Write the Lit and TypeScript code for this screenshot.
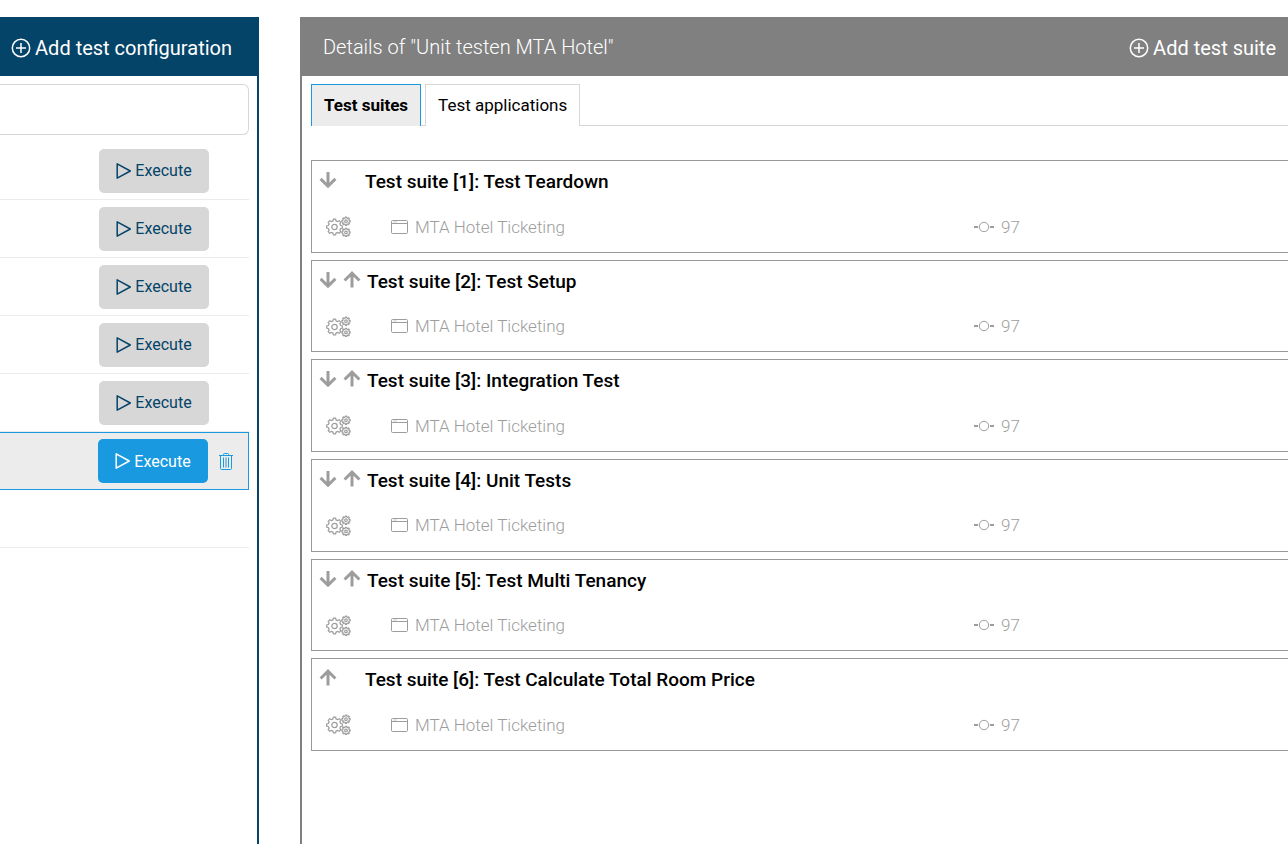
import { LitElement, html, svg, css, nothing } from "lit";
import { customElement, property, state } from "lit/decorators.js";
import { classMap } from "lit/directives/class-map.js";

/** Outline of a cog wheel with rounded-off teeth. */
function cog(cx: number, cy: number, outer: number, inner: number, teeth: number): string {
  const step = (Math.PI * 2) / teeth;
  const points: string[] = [];
  for (let i = 0; i < teeth; i++) {
    const mid = i * step;
    const corners: [number, number][] = [
      [inner, -0.3],
      [outer, -0.19],
      [outer, 0.19],
      [inner, 0.3],
    ];
    for (const [radius, offset] of corners) {
      const angle = mid + offset * step;
      points.push(`${(cx + radius * Math.cos(angle)).toFixed(2)} ${(cy + radius * Math.sin(angle)).toFixed(2)}`);
    }
  }
  return `M${points.join("L")}Z`;
}

const plusIcon = html`<svg width="20" height="20" viewBox="0 0 20 20" aria-hidden="true" fill="none" stroke="currentColor" stroke-width="1.5">
  <circle cx="10" cy="10" r="8.7" /><path d="M10 5v10M5 10h10" />
</svg>`;

const playIcon = html`<svg width="16" height="18" viewBox="0 0 16 18" aria-hidden="true" fill="none" stroke="currentColor" stroke-width="1.5" stroke-linejoin="round">
  <path d="M1.2 1.8L14.3 9L1.2 16.2Z" />
</svg>`;

const trashIcon = html`<svg width="14" height="17" viewBox="0 0 14 17" aria-hidden="true" fill="none" stroke="currentColor" stroke-width="1">
  <path d="M0 2.5H14M4.5 2.5V1.5Q4.5 .5 5.5 .5H8.5Q9.5 .5 9.5 1.5V2.5M1.5 2.5V15.5Q1.5 16.5 2.5 16.5H11.5Q12.5 16.5 12.5 15.5V2.5M4.5 4.5V14.5M7 4.5V14.5M9.5 4.5V14.5" />
</svg>`;

const downIcon = html`<svg width="18" height="18" viewBox="0 0 18 18" aria-hidden="true" fill="none" stroke="currentColor" stroke-width="3">
  <path d="M9 1V15M1.6 7.9L9 15.2L16.4 7.9" />
</svg>`;

const upIcon = html`<svg width="18" height="18" viewBox="0 0 18 18" aria-hidden="true" fill="none" stroke="currentColor" stroke-width="3">
  <path d="M9 16.4V2.4M1.6 9.5L9 2.2L16.4 9.5" />
</svg>`;

const gears = [
  { x: 8.5, y: 11, outer: 7.9, inner: 6.3, hub: 2.7, teeth: 8 },
  { x: 20, y: 5.2, outer: 4.2, inner: 3.3, hub: 1.3, teeth: 8 },
  { x: 20, y: 16.4, outer: 4.2, inner: 3.3, hub: 1.3, teeth: 8 },
];

const gearsIcon = html`<svg width="25" height="21" viewBox="0 0 25 21" aria-hidden="true" fill="none" stroke="currentColor" stroke-width="1.2" stroke-linejoin="round">
  ${gears.map((g) => svg`<path d=${cog(g.x, g.y, g.outer, g.inner, g.teeth)} /><circle cx=${g.x} cy=${g.y} r=${g.hub} />`)}
</svg>`;

const windowIcon = html`<svg width="17" height="14" viewBox="0 0 17 14" aria-hidden="true" fill="none" stroke="currentColor">
  <path d="M1.5 .5H15.5Q16.5 .5 16.5 1.5V12.5Q16.5 13.5 15.5 13.5H1.5Q.5 13.5 .5 12.5V1.5Q.5 .5 1.5 .5ZM.5 3.5H16.5M2.5 2H3.5M4.5 2H5.5" />
</svg>`;

const stepIcon = html`<svg width="20" height="12" viewBox="0 0 20 12" aria-hidden="true" fill="none" stroke="currentColor">
  <circle cx="10" cy="6" r="4.7" /><path stroke-width="2" d="M0 6H4M16 6H20" />
</svg>`;

@customElement("test-suite-card")
class TestSuiteCard extends LitElement {
  @property() heading = "";
  @property() application = "";
  @property({ type: Number }) steps = 0;
  @property({ type: Boolean }) down = false;
  @property({ type: Boolean }) up = false;

  static styles = css`
    :host {
      display: block;
      box-sizing: border-box;
      border: 1px solid #999;
      border-right: 0;
      color: #9d9d9d;
    }
    .top {
      display: flex;
      align-items: center;
      height: 42px;
      padding-left: 7px;
    }
    .moves {
      display: flex;
      gap: 6px;
      min-width: 46px;
      padding-bottom: 4px;
    }
    .move {
      display: block;
      padding: 0;
      border: 0;
      background: none;
      color: inherit;
    }
    svg {
      display: block;
      flex: none;
    }
    .title {
      margin: 0;
      color: #000;
      font-size: 19px;
      font-weight: 500;
      line-height: 24px;
    }
    .both {
      min-width: 48px;
    }
    .info {
      display: grid;
      grid-template-columns: 79px 13fr 7fr;
      align-items: center;
      height: 47px;
      font-size: 17px;
      font-weight: 300;
    }
    .kind {
      padding-left: 14px;
    }
    .item {
      display: flex;
      align-items: center;
      gap: 7px;
    }
  `;

  render() {
    return html`
      <div class="top">
        <div class=${classMap({ moves: true, both: this.down && this.up })}>
          ${this.down ? html`<button class="move" aria-label="Move down">${downIcon}</button>` : nothing}
          ${this.up ? html`<button class="move" aria-label="Move up">${upIcon}</button>` : nothing}
        </div>
        <h3 class="title">${this.heading}</h3>
      </div>
      <div class="info">
        <span class="kind">${gearsIcon}</span>
        <span class="item">${windowIcon}<span>${this.application}</span></span>
        <span class="item">${stepIcon}<span>${this.steps}</span></span>
      </div>
    `;
  }
}

@customElement("app-root")
class AppRoot extends LitElement {
  @state() private tab = 0;

  private tabs = ["Test suites", "Test applications"];
  private suites = [
    "Test Teardown",
    "Test Setup",
    "Integration Test",
    "Unit Tests",
    "Test Multi Tenancy",
    "Test Calculate Total Room Price",
  ];
  private configurations = ["idle", "idle", "idle", "idle", "idle", "selected", "empty"];

  static styles = css`
    :host {
      display: grid;
      grid-template-columns: minmax(259px, 1fr) minmax(0, 4fr);
      gap: 41px;
      box-sizing: border-box;
      min-height: 100vh;
      padding-top: 17px;
      background: #fff;
      color: #000;
      font-family: Roboto, "Open Sans", sans-serif;
      font-size: 16px;
    }
    button,
    input {
      font: inherit;
    }
    svg {
      display: block;
      flex: none;
    }
    .configs {
      border-right: 2px solid #044468;
    }
    .details {
      border-left: 2px solid #808080;
    }
    .bar {
      display: flex;
      align-items: center;
      justify-content: flex-end;
      height: 59px;
      color: #fff;
      font-size: 20px;
    }
    .configs .bar {
      padding-right: 25px;
      background: #044468;
    }
    .details .bar {
      justify-content: space-between;
      padding: 0 12px 0 21px;
      background: #808080;
    }
    .heading {
      margin: 0;
      font-size: 20px;
      font-weight: 300;
    }
    .add {
      display: flex;
      align-items: center;
      gap: 4px;
      padding: 3px 0 0;
      border: 0;
      background: none;
      color: inherit;
      white-space: nowrap;
    }
    .left {
      padding: 8px 8px 0 0;
    }
    .search {
      display: block;
      box-sizing: border-box;
      width: 100%;
      height: 51px;
      margin-bottom: 7px;
      padding: 0 12px;
      border: 1px solid #d7d7d7;
      border-left: 0;
      border-radius: 0 6px 6px 0;
      background: #fff;
    }
    .list {
      margin: 0;
      padding: 0;
      list-style: none;
    }
    .row {
      display: flex;
      align-items: center;
      justify-content: flex-end;
      box-sizing: border-box;
      height: 58px;
      padding-right: 40px;
      border-bottom: 1px solid #ebebeb;
    }
    .selected {
      gap: 11px;
      padding-right: 15px;
      border: 1px solid #1899e0;
      border-left: 0;
      background: #ececec;
    }
    .run {
      display: flex;
      align-items: center;
      justify-content: center;
      gap: 3px;
      width: 110px;
      height: 44px;
      padding: 0;
      border: 0;
      border-radius: 5px;
      background: #d7d7d7;
      color: #044468;
    }
    .selected .run {
      background: #1899e0;
      color: #fff;
    }
    .remove {
      padding: 0;
      border: 0;
      background: none;
      color: #1899e0;
    }
    .right {
      padding: 8px 0 0 9px;
    }
    .tabs {
      display: flex;
      gap: 4px;
      height: 41px;
      border-bottom: 1px solid #d7d7d7;
    }
    .tab {
      height: 42px;
      padding: 0 12px 2px;
      border: 1px solid #d7d7d7;
      border-bottom: 0;
      background: #fff;
      color: #000;
      font-size: 17px;
    }
    .active {
      border-color: #1899e0;
      background: #ececec;
      font-weight: 700;
    }
    .suites {
      display: grid;
      grid-auto-rows: 1fr;
      gap: 7px;
      min-height: 591px;
      margin-top: 34px;
    }
  `;

  private row(kind: string) {
    return html`<li class=${classMap({ row: true, selected: kind === "selected" })}>
      ${kind === "empty" ? nothing : html`<button class="run">${playIcon}<span>Execute</span></button>`}
      ${kind === "selected" ? html`<button class="remove" aria-label="Delete">${trashIcon}</button>` : nothing}
    </li>`;
  }

  render() {
    return html`
      <section class="configs">
        <div class="bar">
          <button class="add">${plusIcon}<span>Add test configuration</span></button>
        </div>
        <div class="left">
          <input class="search" type="text" aria-label="Search test configurations" />
          <ul class="list">${this.configurations.map((kind) => this.row(kind))}</ul>
        </div>
      </section>
      <section class="details">
        <div class="bar">
          <h2 class="heading">Details of "Unit testen MTA Hotel"</h2>
          <button class="add">${plusIcon}<span>Add test suite</span></button>
        </div>
        <div class="right">
          <div class="tabs" role="tablist">
            ${this.tabs.map(
              (name, i) => html`<button
                class=${classMap({ tab: true, active: i === this.tab })}
                role="tab"
                aria-selected=${i === this.tab ? "true" : "false"}
                @click=${() => (this.tab = i)}
              >${name}</button>`,
            )}
          </div>
          <div class="suites">
            ${this.suites.map(
              (name, i) => html`<test-suite-card
                heading=${`Test suite [${i + 1}]: ${name}`}
                application="MTA Hotel Ticketing"
                .steps=${97}
                ?down=${i < this.suites.length - 1}
                ?up=${i > 0}
              ></test-suite-card>`,
            )}
          </div>
        </div>
      </section>
    `;
  }
}
